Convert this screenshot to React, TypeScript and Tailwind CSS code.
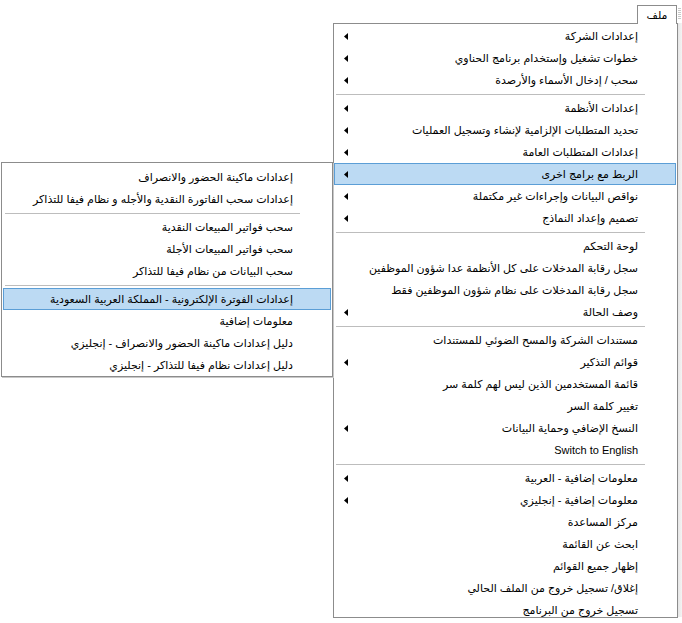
import React from 'react';

type Entry = { label: string; sub?: boolean; active?: boolean } | 'sep';

const mainItems: Entry[] = [
  { label: 'إعدادات الشركة', sub: true },
  { label: 'خطوات تشغيل وإستخدام برنامج الحناوي', sub: true },
  { label: 'سحب / إدخال الأسماء والأرصدة', sub: true },
  'sep',
  { label: 'إعدادات الأنظمة', sub: true },
  { label: 'تحديد المتطلبات الإلزامية لإنشاء وتسجيل العمليات', sub: true },
  { label: 'إعدادات المتطلبات العامة', sub: true },
  { label: 'الربط مع برامج اخرى', sub: true, active: true },
  { label: 'نواقص البيانات وإجراءات غير مكتملة', sub: true },
  { label: 'تصميم وإعداد النماذج', sub: true },
  'sep',
  { label: 'لوحة التحكم' },
  { label: 'سجل رقابة المدخلات على كل الأنظمة عدا شؤون الموظفين' },
  { label: 'سجل رقابة المدخلات على نظام شؤون الموظفين فقط' },
  { label: 'وصف الحالة', sub: true },
  'sep',
  { label: 'مستندات الشركة والمسح الضوئي للمستندات' },
  { label: 'قوائم التذكير', sub: true },
  { label: 'قائمة المستخدمين الذين ليس لهم كلمة سر' },
  { label: 'تغيير كلمة السر' },
  { label: 'النسخ الإضافي وحماية البيانات', sub: true },
  { label: 'Switch to English' },
  'sep',
  { label: 'معلومات إضافية - العربية', sub: true },
  { label: 'معلومات إضافية - إنجليزي', sub: true },
  { label: 'مركز المساعدة' },
  { label: 'ابحث عن القائمة' },
  { label: 'إظهار جميع القوائم' },
  { label: 'إغلاق/ تسجيل خروج من الملف الحالي' },
  { label: 'تسجيل خروج من البرنامج' },
];

const linkItems: Entry[] = [
  { label: 'إعدادات ماكينة الحضور والانصراف' },
  { label: 'إعدادات سحب الفاتورة النقدية والأجله و نظام فيفا للتذاكر' },
  'sep',
  { label: 'سحب فواتير المبيعات النقدية' },
  { label: 'سحب فواتير المبيعات الأجلة' },
  { label: 'سحب البيانات من نظام فيفا للتذاكر' },
  'sep',
  { label: 'إعدادات الفوترة الإلكترونية - المملكة العربية السعودية', active: true },
  { label: 'معلومات إضافية' },
  { label: 'دليل إعدادات ماكينة الحضور والانصراف - إنجليزي' },
  { label: 'دليل إعدادات نظام فيفا للتذاكر - إنجليزي' },
];

function Arrow() {
  return (
    <svg width="4" height="7" viewBox="0 0 4 7" className="shrink-0">
      <polygon points="4,0 4,7 0,3.5" fill="#000" />
    </svg>
  );
}

function MenuList({ items }: { items: Entry[] }) {
  return (
    <div dir="rtl">
      {items.map((item, i) =>
        item === 'sep' ? (
          <div key={i} className="h-[6px] pt-[3px] pl-[2px] pr-[31px]">
            <div className="h-px bg-[#bdbdbd]" />
          </div>
        ) : (
          <div
            key={i}
            className={`flex h-[22px] items-center justify-between pr-[37px] pl-[9px] border ${
              item.active ? 'bg-[#bcdaf3] border-[#5b9ed6]' : 'border-transparent'
            }`}
          >
            <span className="whitespace-nowrap leading-none">{item.label}</span>
            {item.sub && <Arrow />}
          </div>
        )
      )}
    </div>
  );
}

export default function App() {
  return (
    <div className="relative h-[623px] w-[682px] overflow-hidden bg-white text-[11px] text-black font-['Liberation_Sans','DejaVu_Sans',sans-serif]">
      {/* menu bar */}
      <div className="flex h-[23px] items-end justify-end">
        <div className="relative z-10 -mb-px flex h-[19px] w-[40px] items-center justify-center border border-b-0 border-[#8c8c8c] bg-white">
          ملف
        </div>
        <div className="ml-[1px] mr-[1px] mb-[3px] flex h-[12px] w-[3px] flex-col gap-[1px]">
          {[0, 1, 2, 3, 4, 5].map((d) => (
            <div key={d} className="h-px w-[3px] bg-[#c8c8c8]" />
          ))}
        </div>
      </div>

      {/* main menu */}
      <div className="flex pl-[333px]">
        <div className="h-[595px] w-[345px] overflow-hidden border border-[#8c8c8c] bg-white pt-px">
          <div className="mr-px">
            <MenuList items={mainItems} />
          </div>
        </div>
        <div className="h-[594px] w-[4px] bg-gradient-to-r from-[#e6e6e6] to-[#f4f4f4]" />
      </div>

      {/* cascaded sub menu */}
      <div className="absolute left-[1px] top-[162px] w-[332px] border border-[#8c8c8c] bg-white pt-[3px] shadow-[1px_1px_0_#c8c8c8]">
        <div className="mx-px">
          <MenuList items={linkItems} />
        </div>
      </div>
    </div>
  );
}
